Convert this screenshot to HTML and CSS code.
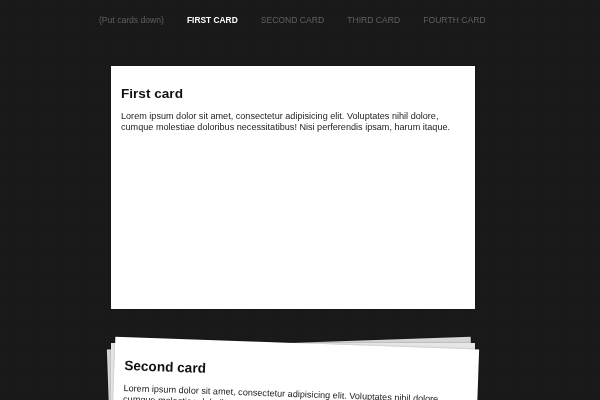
FILE: index.html
```html
<!DOCTYPE html>
<html lang="en">
<head>
  <meta charset="UTF-8" />
  <title>Cards</title>
  <link rel="stylesheet" href="styles.css">
</head>
<body>

  <nav class="menu">
    <a href="#">(Put cards down)</a>
    <a class="active" href="#">FIRST CARD</a>
    <a href="#">SECOND CARD</a>
    <a href="#">THIRD CARD</a>
    <a href="#">FOURTH CARD</a>
  </nav>

  <section class="card">
    <h2>First card</h2>
    <p>Lorem ipsum dolor sit amet, consectetur adipisicing elit. Voluptates nihil dolore, cumque molestiae doloribus necessitatibus! Nisi perferendis ipsam, harum itaque.</p>
  </section>

  <div class="pile">
    <div class="sheet sheet-back"></div>
    <div class="sheet sheet-mid"></div>
    <section class="card card-top">
      <h2>Second card</h2>
      <p>Lorem ipsum dolor sit amet, consectetur adipisicing elit. Voluptates nihil dolore, cumque molestiae doloribus necessitatibus! Nisi perferendis ipsam, harum itaque.</p>
    </section>
  </div>

</body>
</html>
```

FILE: styles.css
```css
html, body {
  height: 400px;
  overflow: hidden;
}

body {
  margin: 0;
  font-family: "Liberation Sans", Arial, sans-serif;
  background-color: #191919;
  background-image: radial-gradient(#1e1e1e 0.7px, transparent 0.8px);
  background-size: 3px 3px;
  filter: blur(0.45px);
}

.menu {
  display: flex;
  gap: 23px;
  height: 66px;
  padding: 15px 0 0 99px;
  box-sizing: border-box;
  font-size: 8.6px;
  line-height: 10px;
}

.menu a {
  color: #606060;
  text-decoration: none;
}

.menu .active {
  color: #fff;
  font-weight: bold;
  font-size: 8.4px;
}

.card {
  box-sizing: border-box;
  width: 364px;
  height: 243px;
  margin-left: 111px;
  padding: 19px 10px;
  background: #fff;
  color: #222;
  box-shadow: 0 0 2px rgba(0,0,0,0.3);
}

.card h2 {
  margin: 0 0 9px;
  font-size: 13.6px;
  line-height: 17px;
  color: #111;
}

.card p {
  margin: 0;
  font-size: 9.1px;
  line-height: 11px;
}

.pile {
  position: relative;
  width: 364px;
  height: 243px;
  margin: 34px 0 0 111px;
}

.sheet {
  position: absolute;
  left: 0;
  top: 0;
  width: 364px;
  height: 243px;
  box-shadow: 0 0 2px rgba(0,0,0,0.3);
}

.sheet-back {
  background: #d6d6d6;
  transform: rotate(-2deg);
}

.sheet-mid {
  background: #e6e6e6;
}

.card-top {
  position: absolute;
  left: 0;
  top: 0;
  margin: 0;
  padding-top: 20px;
  transform: rotate(2deg);
}
```
